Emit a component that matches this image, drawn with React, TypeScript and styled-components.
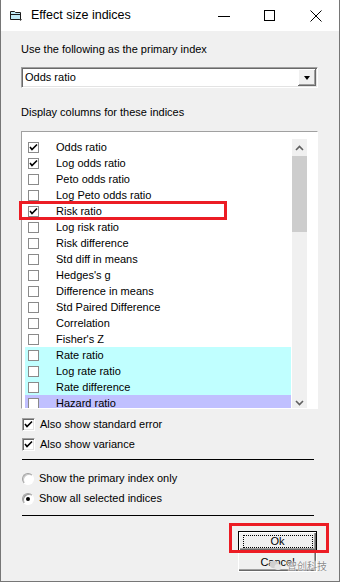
import { createGlobalStyle } from 'styled-components';
import styled from 'styled-components';

const GlobalStyle = createGlobalStyle`
    html, body {
        margin: 0;
        padding: 0;
        background: #ffffff;
    }
    * {
        box-sizing: border-box;
    }
`;

const Fenetre = styled.div`
    position: relative;
    width: 340px;
    height: 582px;
    overflow: hidden;
    background: #f0f0f0;
    border: 1px solid #767676;
    border-top: none;
    font-family: "Liberation Sans", Arial, sans-serif;
    font-size: 11px;
    color: #000;
    display: flex;
    flex-direction: column;
`;

const BarreTitre = styled.div`
    height: 31px;
    background: #ffffff;
    display: flex;
    align-items: center;
    flex-shrink: 0;
`;

const IconeTitre = styled.div`
    width: 13px;
    height: 13px;
    margin-left: 9px;
    display: flex;
`;

const TexteTitre = styled.div`
    flex: auto;
    margin-left: 8px;
    font-size: 12.5px;
    color: #000;
    padding-bottom: 1px;
`;

const BoutonFenetre = styled.div`
    width: 46px;
    height: 31px;
    display: flex;
    align-items: center;
    justify-content: center;
`;

const Corps = styled.div`
    display: flex;
    flex-direction: column;
    padding: 0 21px 0 20px;
`;

const Libelle = styled.div<{ $haut: number }>`
    margin-top: ${({ $haut }) => $haut}px;
    height: 13px;
    line-height: 13px;
    white-space: nowrap;
`;

const Combo = styled.div`
    margin-top: 11px;
    width: 297px;
    height: 21px;
    background: #fff;
    border-style: solid;
    border-width: 1px;
    border-color: #a0a0a0 #fff #fff #a0a0a0;
    box-shadow: inset 1px 1px 0 #696969, inset -1px -1px 0 #e3e3e3;
    display: flex;
    align-items: center;
    padding: 1px 1px 1px 3px;
`;

const ComboTexte = styled.div`
    flex: auto;
    line-height: 13px;
`;

const ComboBouton = styled.div`
    width: 18px;
    height: 17px;
    background: #f0f0f0;
    box-shadow: inset -1px -1px 0 #696969, inset 1px 1px 0 #fff, inset -2px -2px 0 #a0a0a0;
    display: flex;
    align-items: center;
    justify-content: center;
    &::after {
        content: '';
        border-left: 3.5px solid transparent;
        border-right: 3.5px solid transparent;
        border-top: 4px solid #000;
        margin-left: -1px;
    }
`;

const ListeCadre = styled.div`
    margin-top: 12px;
    width: 297px;
    height: 278px;
    background: #fff;
    border-style: solid;
    border-width: 1px;
    border-color: #a0a0a0 #fff #fff #a0a0a0;
    overflow: hidden;
    display: flex;
    align-items: flex-start;
    padding: 7px 0 0 3px;
`;

const ListeItems = styled.div`
    width: 266px;
    display: flex;
    flex-direction: column;
`;

const Ligne = styled.div<{ $fond: string }>`
    height: 16px;
    flex-shrink: 0;
    display: flex;
    align-items: center;
    background: ${({ $fond }) => $fond};
`;

const CaseListe = styled.div`
    width: 11px;
    height: 11px;
    margin-left: 3px;
    border: 1px solid #8a8a8a;
    background: #fff;
    display: flex;
    align-items: center;
    justify-content: center;
`;

const TexteLigne = styled.div`
    margin-left: 17px;
    line-height: 13px;
    white-space: nowrap;
`;

const Defilement = styled.div`
    width: 15px;
    height: 272px;
    margin-left: 1px;
    background: #f0f0f0;
    display: flex;
    flex-direction: column;
    flex-shrink: 0;
`;

const FlecheDefil = styled.div`
    height: 17px;
    display: flex;
    align-items: center;
    justify-content: center;
`;

const Pouce = styled.div`
    height: 76px;
    background: #cdcdcd;
`;

const Piste = styled.div`
    flex: auto;
`;

const LigneOption = styled.div<{ $haut: number }>`
    margin-top: ${({ $haut }) => $haut}px;
    height: 13px;
    display: flex;
    align-items: center;
    padding-left: 1px;
`;

const CaseClassique = styled.div`
    width: 13px;
    height: 13px;
    background: #fff;
    border-style: solid;
    border-width: 1px;
    border-color: #a0a0a0 #fff #fff #a0a0a0;
    box-shadow: inset 1px 1px 0 #696969, inset -1px -1px 0 #e3e3e3;
    display: flex;
    align-items: center;
    justify-content: center;
`;

const Radio = styled.div<{ $actif: boolean }>`
    width: 12px;
    height: 12px;
    border-radius: 50%;
    background: #fff;
    border: 1px solid;
    border-color: #a0a0a0 #fff #fff #a0a0a0;
    box-shadow: inset 1px 1px 0 ${({ $actif }) => ($actif ? '#9a9a9a' : '#c8c8c8')};
    display: flex;
    align-items: center;
    justify-content: center;
    &::after {
        content: '';
        width: 4px;
        height: 4px;
        border-radius: 50%;
        background: ${({ $actif }) => ($actif ? '#000' : 'transparent')};
    }
`;

const TexteOption = styled.div`
    margin-left: 5px;
    line-height: 13px;
    white-space: nowrap;
`;

const Separateur = styled.div<{ $haut: number }>`
    margin-top: ${({ $haut }) => $haut}px;
    width: 292px;
    height: 1px;
    margin-left: 1px;
    background: #000;
`;

const ZoneBoutons = styled.div`
    margin-top: 15px;
    align-self: flex-end;
    margin-right: 1px;
    display: flex;
    flex-direction: column;
    gap: 1px;
`;

const Bouton = styled.div<{ $defaut?: boolean }>`
    width: 79px;
    height: 20px;
    background: #f0f0f0;
    display: flex;
    align-items: center;
    justify-content: center;
    border: 1px solid ${({ $defaut }) => ($defaut ? '#000' : '#fff')};
    box-shadow: ${({ $defaut }) =>
        $defaut
            ? 'inset 1px 1px 0 #fff, inset -1px -1px 0 #696969, inset -2px -2px 0 #a0a0a0'
            : 'inset -1px -1px 0 #696969, inset -2px -2px 0 #a0a0a0'};
`;

const Focus = styled.div`
    width: 70px;
    height: 13px;
    border: 1px dotted #000;
    display: flex;
    align-items: center;
    justify-content: center;
    font-size: 11px;
    line-height: 11px;
`;

const Annotation = styled.div<{ $x: number; $y: number; $l: number; $h: number }>`
    position: absolute;
    left: ${({ $x }) => $x}px;
    top: ${({ $y }) => $y}px;
    width: ${({ $l }) => $l}px;
    height: ${({ $h }) => $h}px;
    border: 3px solid #ec1c24;
    pointer-events: none;
`;

const Filigrane = styled.div`
    position: absolute;
    left: 268px;
    top: 558px;
    display: flex;
    align-items: center;
    gap: 5px;
    font-family: "Noto Sans CJK SC", sans-serif;
    font-size: 10px;
    color: #8c8c8c;
    text-shadow: 0 0 1px #fff, 0 0 1px #fff, 0 0 2px #fff;
`;

const Coche = () => (
    <svg width="9" height="9" viewBox="0 0 9 9">
        <path d="M1 4 L3 6.5 L8 1.5" stroke="#000" strokeWidth="1.6" fill="none" />
    </svg>
);

const lignes: { texte: string; coche?: boolean; fond?: string }[] = [
    { texte: 'Odds ratio', coche: true },
    { texte: 'Log odds ratio', coche: true },
    { texte: 'Peto odds ratio' },
    { texte: 'Log Peto odds ratio' },
    { texte: 'Risk ratio', coche: true },
    { texte: 'Log risk ratio' },
    { texte: 'Risk difference' },
    { texte: 'Std diff in means' },
    { texte: "Hedges's g" },
    { texte: 'Difference in means' },
    { texte: 'Std Paired Difference' },
    { texte: 'Correlation' },
    { texte: "Fisher's Z" },
    { texte: 'Rate ratio', fond: '#c0ffff' },
    { texte: 'Log rate ratio', fond: '#c0ffff' },
    { texte: 'Rate difference', fond: '#c0ffff' },
    { texte: 'Hazard ratio', fond: '#c0c0ff' },
];

const App = () => {
    return (
        <>
            <GlobalStyle />
            <Fenetre>
                <BarreTitre>
                    <IconeTitre>
                        <svg width="13" height="13" viewBox="0 0 13 13">
                            <path d="M0.5 2.5 H4.5 L5.5 3.5 H10.5 V10.5 H0.5 Z" fill="#bfe9f5" stroke="#1a1a1a" />
                            <path d="M0.5 5.5 H10.5" stroke="#1a1a1a" />
                            <path d="M9 10 L12 10 L10.5 12 Z" fill="#333" />
                        </svg>
                    </IconeTitre>
                    <TexteTitre>Effect size indices</TexteTitre>
                    <BoutonFenetre>
                        <svg width="12" height="12" viewBox="0 0 12 12">
                            <path d="M0 6.5 H12" stroke="#000" />
                        </svg>
                    </BoutonFenetre>
                    <BoutonFenetre>
                        <svg width="12" height="12" viewBox="0 0 12 12">
                            <rect x="0.5" y="0.5" width="10" height="10" fill="none" stroke="#000" />
                        </svg>
                    </BoutonFenetre>
                    <BoutonFenetre>
                        <svg width="12" height="12" viewBox="0 0 12 12">
                            <path d="M0.5 0.5 L11.5 11.5 M11.5 0.5 L0.5 11.5" stroke="#000" />
                        </svg>
                    </BoutonFenetre>
                </BarreTitre>

                <Corps>
                    <Libelle $haut={12}>Use the following as the primary index</Libelle>
                    <Combo>
                        <ComboTexte>Odds ratio</ComboTexte>
                        <ComboBouton />
                    </Combo>

                    <Libelle $haut={18}>Display columns for these indices</Libelle>
                    <ListeCadre>
                        <ListeItems>
                            {lignes.map((l) => (
                                <Ligne key={l.texte} $fond={l.fond ?? 'transparent'}>
                                    <CaseListe>{l.coche && <Coche />}</CaseListe>
                                    <TexteLigne>{l.texte}</TexteLigne>
                                </Ligne>
                            ))}
                        </ListeItems>
                        <Defilement>
                            <FlecheDefil>
                                <svg width="9" height="6" viewBox="0 0 9 6">
                                    <path d="M1 5 L4.5 1.5 L8 5" stroke="#606060" strokeWidth="1.6" fill="none" />
                                </svg>
                            </FlecheDefil>
                            <Pouce />
                            <Piste />
                            <FlecheDefil>
                                <svg width="9" height="6" viewBox="0 0 9 6">
                                    <path d="M1 1 L4.5 4.5 L8 1" stroke="#606060" strokeWidth="1.6" fill="none" />
                                </svg>
                            </FlecheDefil>
                        </Defilement>
                    </ListeCadre>

                    <LigneOption $haut={9}>
                        <CaseClassique><Coche /></CaseClassique>
                        <TexteOption>Also show standard error</TexteOption>
                    </LigneOption>
                    <LigneOption $haut={7}>
                        <CaseClassique><Coche /></CaseClassique>
                        <TexteOption>Also show variance</TexteOption>
                    </LigneOption>

                    <Separateur $haut={8} />

                    <LigneOption $haut={12}>
                        <Radio $actif={false} />
                        <TexteOption>Show the primary index only</TexteOption>
                    </LigneOption>
                    <LigneOption $haut={7}>
                        <Radio $actif />
                        <TexteOption>Show all selected indices</TexteOption>
                    </LigneOption>

                    <Separateur $haut={10} />

                    <ZoneBoutons>
                        <Bouton $defaut>
                            <Focus>Ok</Focus>
                        </Bouton>
                        <Bouton>Cancel</Bouton>
                    </ZoneBoutons>
                </Corps>

                <Annotation $x={18} $y={201} $l={208} $h={19} />
                <Annotation $x={228} $y={523} $l={100} $h={30} />

                <Filigrane>
                    <svg width="13" height="11" viewBox="0 0 13 11">
                        <ellipse cx="5" cy="4.5" rx="4.5" ry="3.8" fill="#d0d0d0" />
                        <ellipse cx="9" cy="7" rx="3.5" ry="3" fill="#e6e6e6" />
                    </svg>
                    <span>智创科技</span>
                </Filigrane>
            </Fenetre>
        </>
    );
};

export default App;
